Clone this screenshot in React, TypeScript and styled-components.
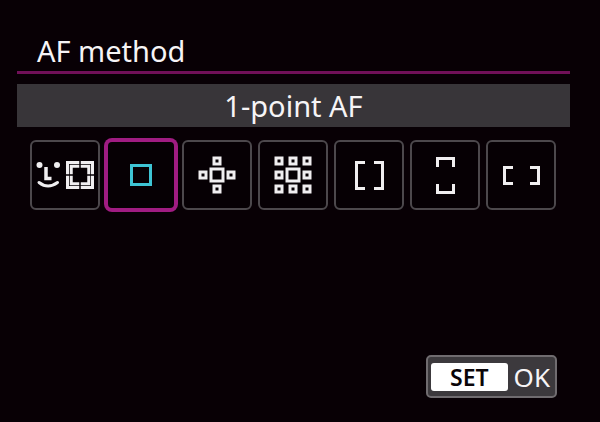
import React, { useState } from "react";
import styled, { createGlobalStyle } from "styled-components";

const GlobalStyle = createGlobalStyle`
  *, *::before, *::after { box-sizing: border-box; }
  body {
    margin: 0;
    background: #080005;
    color: #f6f4f6;
    font-family: "Noto Sans", "Open Sans", sans-serif;
  }
`;

const Screen = styled.main`
  display: flex;
  flex-direction: column;
  min-height: 100vh;
  padding: 30px 30px 24px 17px;
`;

const Title = styled.h1`
  margin: 0;
  padding: 0 20px;
  border-bottom: 3px solid #701058;
  font-size: 29px;
  line-height: 41px;
  font-weight: 400;
`;

const Current = styled.div`
  margin-top: 10px;
  background: #383539;
  font-size: 29px;
  line-height: 43px;
  text-align: center;
`;

const Methods = styled.div`
  display: grid;
  grid-template-columns: repeat(7, 1fr);
  gap: 6px;
  margin: 13px 14px 0 13px;
`;

const Tile = styled.button<{ $selected: boolean }>`
  aspect-ratio: 1;
  padding: 0;
  border: 2px solid ${(p) => (p.$selected ? "#a01c82" : "#4c484c")};
  border-radius: 6px;
  background: #060004;
  box-shadow: ${(p) => (p.$selected ? "0 0 0 2px #a01c82" : "none")};
  color: ${(p) => (p.$selected ? "#3ec4d4" : "#f0eef0")};
  cursor: pointer;
`;

const Icon = styled.svg`
  display: block;
  width: 100%;
  height: 100%;
  fill: none;
  stroke: currentColor;
  stroke-width: 3;
`;

const Footer = styled.footer`
  display: flex;
  justify-content: flex-end;
  margin-top: auto;
  padding-right: 13px;
`;

const Confirm = styled.button`
  display: flex;
  align-items: center;
  gap: 6px;
  height: 43px;
  padding: 0 5px 0 3px;
  border: 2px solid #706c70;
  border-radius: 5px;
  background: #3c393d;
  color: #f6f4f6;
  font-family: inherit;
  font-size: 26px;
  line-height: 36px;
  cursor: pointer;
`;

const Key = styled.span`
  padding: 0 19px;
  border-radius: 3px;
  background: #ffffff;
  color: #0a0508;
  font-size: 23px;
  line-height: 28px;
  font-weight: 600;
`;

const Point = ({ x, y }: { x: number; y: number }) => (
  <rect x={x - 3} y={y - 3} width="6" height="6" />
);

const methods = [
  {
    name: "Face + tracking",
    icon: (
      <>
        <g fill="currentColor" stroke="none">
          <circle cx="9.5" cy="25" r="3" />
          <circle cx="27" cy="25" r="3" />
        </g>
        <path d="M16 27V38.5H21.5" strokeWidth="3.5" />
        <path d="M9 42.5Q18 49.5 27.5 42.5" strokeLinecap="round" />
        <rect x="37.5" y="22.5" width="25" height="25" />
        <rect x="41.25" y="26.25" width="17.5" height="17.5" />
        <path d="M50 20V50M35 35H65" stroke="#060004" strokeWidth="1.5" />
      </>
    ),
  },
  {
    name: "1-point AF",
    icon: <rect x="25.5" y="25.5" width="19" height="19" />,
  },
  {
    name: "Expand AF area",
    icon: (
      <>
        <rect x="29" y="29" width="12" height="12" />
        <Point x={35} y={21} />
        <Point x={21} y={35} />
        <Point x={49} y={35} />
        <Point x={35} y={49} />
      </>
    ),
  },
  {
    name: "Expand AF area: Around",
    icon: (
      <>
        <rect x="29" y="29" width="12" height="12" />
        {[21, 35, 49].map((y) =>
          [21, 35, 49].map((x) =>
            x === 35 && y === 35 ? null : <Point key={`${x}-${y}`} x={x} y={y} />
          )
        )}
      </>
    ),
  },
  {
    name: "Zone AF",
    icon: <path d="M31 22.5H22.5V48.5H31M40 22.5H48.5V48.5H40" />,
  },
  {
    name: "Large zone AF: Vertical",
    icon: <path d="M27.5 27V18.5H43.5V27M27.5 44V52.5H43.5V44" />,
  },
  {
    name: "Large zone AF: Horizontal",
    icon: <path d="M27 27.5H18.5V43.5H27M44 27.5H52.5V43.5H44" />,
  },
];

export default function App() {
  const [selected, setSelected] = useState(1);
  return (
    <>
      <GlobalStyle />
      <Screen>
        <Title>AF method</Title>
        <Current>{methods[selected].name}</Current>
        <Methods role="group" aria-label="AF method">
          {methods.map((method, index) => (
            <Tile
              key={method.name}
              type="button"
              $selected={index === selected}
              aria-pressed={index === selected}
              aria-label={method.name}
              onClick={() => setSelected(index)}
            >
              <Icon viewBox="2 2 66 66" aria-hidden="true">
                {method.icon}
              </Icon>
            </Tile>
          ))}
        </Methods>
        <Footer>
          <Confirm type="button">
            <Key>SET</Key>
            OK
          </Confirm>
        </Footer>
      </Screen>
    </>
  );
}
